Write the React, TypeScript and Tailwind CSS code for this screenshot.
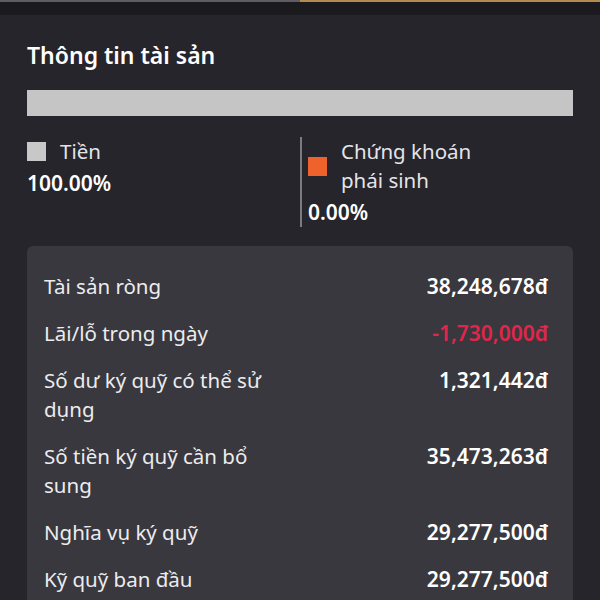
import React from 'react';

const rows = [
  { label: 'Tài sản ròng', value: '38,248,678đ' },
  { label: 'Lãi/lỗ trong ngày', value: '-1,730,000đ', negative: true },
  { label: 'Số dư ký quỹ có thể sử dụng', value: '1,321,442đ' },
  { label: 'Số tiền ký quỹ cần bổ sung', value: '35,473,263đ' },
  { label: 'Nghĩa vụ ký quỹ', value: '29,277,500đ' },
  { label: 'Kỹ quỹ ban đầu', value: '29,277,500đ' },
];

export default function App() {
  return (
    <div className="w-[600px] h-[600px] overflow-hidden bg-[#26252b] text-[#ececee] font-['Noto_Sans',sans-serif]">
      <div className="flex h-[2px]">
        <div className="w-[300px] bg-[#5e5d63]" />
        <div className="flex-1 bg-[#b48a4e]" />
      </div>
      <div className="h-[13px] bg-[#1b1a1f]" />

      <div className="px-[27px]">
        <h2 className="mt-[24px] text-[23px] leading-[32px] font-semibold text-white">Thông tin tài sản</h2>

        <div className="mt-[19px] h-[26px] bg-[#c5c5c5]" />

        <div className="mt-[21px] flex">
          <div className="w-[273px]">
            <div className="flex items-center gap-[14px]">
              <span className="w-[19px] h-[19px] bg-[#c8c8c8]" />
              <span className="text-[20.5px] leading-[29px] text-[#e4e4e7]">Tiền</span>
            </div>
            <div className="mt-[2px] text-[21px] leading-[30px] font-semibold text-white">100.00%</div>
          </div>
          <div className="border-l-2 border-[#7c7b80] pl-[6px]">
            <div className="flex items-center gap-[14px]">
              <span className="w-[19px] h-[19px] bg-[#f0622c]" />
              <span className="w-[140px] text-[20.5px] leading-[29px] text-[#e4e4e7]">Chứng khoán phái sinh</span>
            </div>
            <div className="mt-[2px] text-[21px] leading-[30px] font-semibold text-white">0.00%</div>
          </div>
        </div>

        <div className="mt-[19px] rounded-[6px] bg-[#39383e] pl-[17px] pr-[25px] pt-[26px] pb-[20px] flex flex-col gap-[18px]">
          {rows.map((r) => (
            <div key={r.label} className="flex justify-between items-start leading-[29px]">
              <span className="max-w-[225px] text-[20.5px] text-[#ececee]">{r.label}</span>
              <span className={r.negative ? 'text-[21px] font-semibold text-[#e0264a]' : 'text-[21px] font-semibold text-white'}>{r.value}</span>
            </div>
          ))}
        </div>
      </div>
    </div>
  );
}
